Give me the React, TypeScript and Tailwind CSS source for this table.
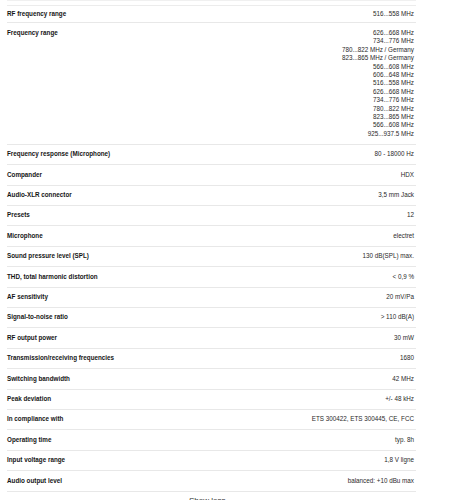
import React from "react";

type Spec = { label: string; values: string[] };

const specs: Spec[] = [
	{ label: "RF frequency range", values: ["516...558 MHz"] },
	{
		label: "Frequency range",
		values: [
			"626...668 MHz",
			"734...776 MHz",
			"780...822 MHz / Germany",
			"823...865 MHz / Germany",
			"566...608 MHz",
			"606...648 MHz",
			"516...558 MHz",
			"626...668 MHz",
			"734...776 MHz",
			"780...822 MHz",
			"823...865 MHz",
			"566...608 MHz",
			"925...937.5 MHz",
		],
	},
	{ label: "Frequency response (Microphone)", values: ["80 - 18000 Hz"] },
	{ label: "Compander", values: ["HDX"] },
	{ label: "Audio-XLR connector", values: ["3,5 mm Jack"] },
	{ label: "Presets", values: ["12"] },
	{ label: "Microphone", values: ["electret"] },
	{ label: "Sound pressure level (SPL)", values: ["130 dB(SPL) max."] },
	{ label: "THD, total harmonic distortion", values: ["< 0,9 %"] },
	{ label: "AF sensitivity", values: ["20 mV/Pa"] },
	{ label: "Signal-to-noise ratio", values: ["> 110 dB(A)"] },
	{ label: "RF output power", values: ["30 mW"] },
	{ label: "Transmission/receiving frequencies", values: ["1680"] },
	{ label: "Switching bandwidth", values: ["42 MHz"] },
	{ label: "Peak deviation", values: ["+/- 48 kHz"] },
	{ label: "In compliance with", values: ["ETS 300422, ETS 300445, CE, FCC"] },
	{ label: "Operating time", values: ["typ. 8h"] },
	{ label: "Input voltage range", values: ["1,8 V ligne"] },
	{ label: "Audio output level", values: ["balanced: +10 dBu max"] },
];

export default function App() {
	return (
		<div
			className="h-[500px] w-[472px] overflow-hidden bg-white text-[6.3px] leading-[8.4px]"
			style={{ fontFamily: '"Liberation Sans", Arial, sans-serif' }}
		>
			<div className="ml-[7px] w-[409px] border-t border-[#f0f0f0] pt-[4px]">
				<dl className="border-t border-[#ececec]">
					{specs.map((spec, i) => (
						<div
							key={spec.label}
							className={`flex justify-between border-b border-[#e8e8e8] ${
								i === 0 ? "py-[4px]" : "py-[5.5px]"
							}`}
						>
							<dt className="font-bold text-[#151515]">{spec.label}</dt>
							<dd className="pr-[2px] text-right text-[#2a2a2a]">
								{spec.values.map((v, j) => (
									<div key={j}>{v}</div>
								))}
							</dd>
						</div>
					))}
				</dl>
				<div className="mt-[5px] pl-[182px] text-[8px] text-[#333]">
					Show less
				</div>
			</div>
		</div>
	);
}
